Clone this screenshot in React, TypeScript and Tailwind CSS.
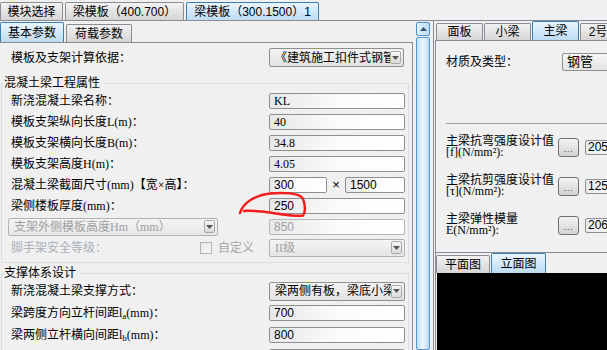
import clsx from 'clsx';

const serif = "font-['Liberation_Serif','Noto_Sans_CJK_SC',serif]";
const sans = "font-['Liberation_Sans','Noto_Sans_CJK_SC',sans-serif]";

const Tab = ({ label, active, w, short }: { label: string; active?: boolean; w: string; short?: boolean }) => (
  <div
    className={clsx(
      'flex items-center justify-center border border-b-0 rounded-t-[2px] shrink-0 whitespace-nowrap',
      w,
      active
        ? 'h-full border-[#3c7fb1] bg-gradient-to-b from-[#e9f5fd] to-[#bddcf3]'
        : 'border-[#898c95] bg-gradient-to-b from-[#f3f3f3] to-[#d5d5d5]',
      !active && (short ? 'h-[calc(100%-2px)]' : 'h-full')
    )}
  >
    {label}
  </div>
);

const DropBtn = () => (
  <div className="w-[11px] h-[13px] flex items-center justify-center border border-[#a9a9a9] rounded-[2px] bg-gradient-to-b from-[#f7f7f7] to-[#dadada] shrink-0">
    <svg width="7" height="4" viewBox="0 0 7 4">
      <path d="M0 0h7L3.5 4z" fill="#555" />
    </svg>
  </div>
);

const Combo = ({ text, w, h = 'h-[19px]', disabled }: { text: React.ReactNode; w: string; h?: string; disabled?: boolean }) => (
  <div
    className={clsx(
      'flex items-center border rounded-[2px] pl-[5px] pr-[2px] overflow-hidden shrink-0 bg-gradient-to-b',
      w,
      h,
      disabled ? 'border-[#adb2b5] from-[#f4f4f4] to-[#e6e6e6] text-[#a0a0a0]' : 'border-[#8e8f8f] from-[#f3f3f3] to-[#e2e2e2] text-black'
    )}
  >
    <span className="flex-1 whitespace-nowrap overflow-hidden">{text}</span>
    <DropBtn />
  </div>
);

const Field = ({ value, w = 'w-[136px]', disabled, font = serif }: { value: string; w?: string; disabled?: boolean; font?: string }) => (
  <div
    className={clsx(
      'h-[16px] flex items-center pl-[4px] border rounded-[2px] bg-gradient-to-r from-[#e7e8e9] via-[#fbfbfb] to-white shrink-0 text-[12px] leading-none',
      w,
      font,
      disabled ? 'border-[#b4b8bb] text-[#a0a0a0]' : 'border-[#8f9092] text-black'
    )}
  >
    {value}
  </div>
);

const Row = ({ label, children, h = 'h-[21px]' }: { label: React.ReactNode; children: React.ReactNode; h?: string }) => (
  <div className={clsx('flex items-center pl-[9px] pr-[3px]', h)}>
    <span className="flex-1 whitespace-nowrap">{label}</span>
    {children}
  </div>
);

const Legend = ({ text }: { text: string }) => (
  <legend className="ml-[2px] pr-[4px] h-[14px] leading-[14px]">{text}</legend>
);

const PropRow = ({ l1, l2, value, className }: { l1: string; l2: React.ReactNode; value: string; className: string }) => (
  <div className={clsx('flex items-center h-[26px] pl-[10px]', className)}>
    <div className="w-[112px] shrink-0 leading-[11px]">
      <div className="whitespace-nowrap">{l1}</div>
      <div className="whitespace-nowrap">{l2}</div>
    </div>
    <div className="w-[21px] h-[19px] border border-[#707070] rounded-[3px] bg-gradient-to-b from-[#f4f4f4] to-[#d3d3d3] flex items-end justify-center pb-[2px] text-[9px] leading-none shrink-0 tracking-[1px]">
      ...
    </div>
    <div className={clsx('ml-[6px] w-[40px] h-[15px] border border-[#8f9092] rounded-[2px] bg-gradient-to-r from-[#e9eaeb] to-white flex items-center pl-[2px] text-[12px] leading-none', sans)}>
      {value}
    </div>
  </div>
);

export default function App() {
  return (
    <div className={clsx('relative w-[607px] h-[350px] overflow-hidden bg-[#f0f0f0] flex flex-col text-[12px] text-black', serif)}>
      {/* top module tabs */}
      <div className={clsx('h-[21px] flex items-end gap-[2px] border-b border-[#898c95] shrink-0 pt-[2px] text-[12px]', sans)}>
        <Tab label="模块选择" w="w-[63px]" />
        <Tab label="梁模板（400.700）" w="w-[119px]" />
        <Tab label="梁模板（300.1500）1" w="w-[133px]" active />
      </div>

      <div className="flex h-[329px]">
        {/* left parameter panel */}
        <div className="w-[413px] shrink-0 flex flex-col">
          <div className={clsx('h-[21px] flex items-end gap-[2px] shrink-0 pt-[1px]', sans)}>
            <Tab label="基本参数" w="w-[64px]" active />
            <Tab label="荷载参数" w="w-[66px]" short />
          </div>
          <div className="flex-1 border-t border-r border-[#898c95] pt-[5px] overflow-hidden">
            <div className="flex items-center h-[19px] pl-[11px] pr-[8px]">
              <span className="flex-1 whitespace-nowrap">模板及支架计算依据：</span>
              <Combo w="w-[135px]" text="《建筑施工扣件式钢管脚手架安全技术规范》" />
            </div>

            <fieldset className="mt-[9px] ml-[1px] mr-[3px] border border-[#d5dfe5] pb-[4px]">
              <Legend text="混凝土梁工程属性" />
              <Row label="新浇混凝土梁名称：">
                <Field value="KL" />
              </Row>
              <Row label="模板支架纵向长度L(m)：">
                <Field value="40" />
              </Row>
              <Row label="模板支架横向长度B(m)：">
                <Field value="34.8" />
              </Row>
              <Row label="模板支架高度H(m)：">
                <Field value="4.05" />
              </Row>
              <Row label="混凝土梁截面尺寸(mm)【宽×高】：">
                <Field value="300" w="w-[58px]" font={sans} />
                <span className={clsx('w-[18px] text-center text-[13px]', sans)}>×</span>
                <Field value="1500" w="w-[60px]" font={sans} />
              </Row>
              <Row label="梁侧楼板厚度(mm)：">
                <Field value="250" font={sans} />
              </Row>
              <div className="flex items-center h-[21px] pl-[6px] pr-[3px]">
                <Combo w="w-[210px]" h="h-[18px]" disabled text="支架外侧模板高度Hm（mm）" />
                <span className="flex-1" />
                <Field value="850" font={sans} disabled />
              </div>
              <div className="flex items-center h-[21px] pl-[9px] pr-[3px] text-[#aab0b8]">
                <span className="w-[189px] whitespace-nowrap">脚手架安全等级：</span>
                <span className="w-[12px] h-[12px] border border-[#b1b5b8] bg-gradient-to-br from-[#e8e8e8] to-[#f8f8f8] shrink-0" />
                <span className="ml-[6px] flex-1 text-[#a8a8a8]">自定义</span>
                <Combo w="w-[136px]" h="h-[18px]" disabled text="II级" />
              </div>
            </fieldset>

            <fieldset className="mt-[3px] ml-[1px] mr-[3px] border border-[#d5dfe5] pb-[4px]">
              <Legend text="支撑体系设计" />
              <Row label="新浇混凝土梁支撑方式：" h="h-[22px]">
                <Combo w="w-[136px]" text="梁两侧有板，梁底小梁平行梁跨方向" />
              </Row>
              <Row h="h-[22px]" label={<>梁跨度方向立杆间距l<sub>a</sub>(mm)：</>}>
                <Field value="700" font={sans} />
              </Row>
              <Row h="h-[22px]" label={<>梁两侧立杆横向间距l<sub>b</sub>(mm)：</>}>
                <Field value="800" font={sans} />
              </Row>
              <Row h="h-[22px]" label="梁底增加立杆根数：">
                <Field value="1" font={sans} />
              </Row>
            </fieldset>
          </div>
        </div>

        {/* scrollbar */}
        <div className="w-[21px] shrink-0 border-r border-[#8a8d92] pl-[3px] pt-[1px] flex">
          <div className="w-[14px] flex flex-col">
            <div className="h-[14px] border border-[#4f8fc7] rounded-[2px] bg-gradient-to-r from-[#e2f1fd] to-[#bcdcf5] flex items-center justify-center">
              <svg width="7" height="4" viewBox="0 0 7 4">
                <path d="M3.5 0L7 4H0z" fill="#3b4d60" />
              </svg>
            </div>
            <div className="flex-1 mt-[1px] border border-[#5d98cc] rounded-[2px] bg-gradient-to-r from-[#bcdff9] via-[#eef8ff] to-[#b5d8f4]" />
          </div>
        </div>

        {/* right detail panel */}
        <div className="w-[240px] shrink-0 flex flex-col">
          <div className={clsx('h-[19px] flex items-end gap-[1px] pl-[2px] shrink-0', sans)}>
            <Tab label="面板" w="w-[47px]" short />
            <Tab label="小梁" w="w-[47px]" short />
            <Tab label="主梁" w="w-[47px]" active />
            <Tab label="2号主梁" w="w-[60px]" short />
          </div>
          <div className="h-[213px] ml-[1px] border-l border-t border-b border-[#898c95] shrink-0">
            <div className="flex items-center h-[18px] mt-[12px] pl-[10px]">
              <span className="w-[116px] shrink-0">材质及类型：</span>
              <div className="w-[100px] h-[18px] border border-[#8e8f8f] rounded-[2px] bg-gradient-to-b from-[#f6f6f6] to-[#e4e4e4] flex items-center pl-[4px] text-[13px]">
                钢管
              </div>
            </div>
            <div className="ml-[10px] mt-[52px] h-px bg-[#a0a0a0]" />
            <PropRow className="mt-[10px]" l1="主梁抗弯强度设计值" l2="[f](N/mm²):" value="205" />
            <PropRow className="mt-[13px]" l1="主梁抗剪强度设计值" l2="[τ](N/mm²):" value="125" />
            <PropRow className="mt-[13px]" l1="主梁弹性模量" l2="E(N/mm²):" value="206000" />
          </div>
          <div className="flex-1 ml-[1px] border-l border-[#898c95] flex flex-col">
            <div className="h-[20px] flex items-end gap-[1px] shrink-0">
              <Tab label="平面图" w="w-[54px]" short />
              <Tab label="立面图" w="w-[55px]" active />
            </div>
            <div className="flex-1 ml-[1px] bg-black" />
          </div>
        </div>
      </div>

      {/* red hand-drawn annotation */}
      <svg className="absolute left-0 top-0 pointer-events-none" width="607" height="350" viewBox="0 0 607 350">
        <path
          d="M240 213 C243 203 255 195 270 193.5 C285 192.5 300 193 303 199 C305 204 306 212 303 215.5 C295 217 275 213 262 211.5 C255 211 248 210.5 244 211"
          fill="none"
          stroke="#f51d1d"
          strokeWidth="2.5"
          strokeLinecap="round"
        />
      </svg>
    </div>
  );
}
